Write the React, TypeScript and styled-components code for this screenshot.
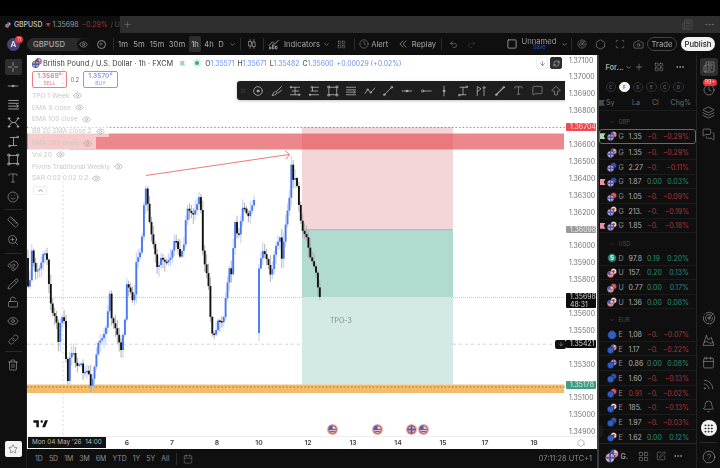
import styled, { createGlobalStyle } from "styled-components";
import {
  ArrowBigDown,
  ArrowBigUp,
  ArrowDown,
  Bell,
  Calendar,
  Camera,
  ChevronDown,
  ChevronUp,
  CircleHelp,
  Clock,
  Ellipsis,
  Eye,
  Grip,
  Hexagon,
  LayoutGrid,
  Layers,
  Link,
  LockOpen,
  Magnet,
  MessageSquare,
  MessagesSquare,
  MountainSnow,
  Newspaper,
  Pencil,
  Plus,
  Radar,
  Redo2,
  RefreshCw,
  Rss,
  Ruler,
  Scan,
  Smile,
  SquarePen,
  Star,
  Trash2,
  Type,
  Undo2,
  ZoomIn,
} from "lucide-react";
import type { ReactNode } from "react";

const GlobalStyle = createGlobalStyle`
  html, body {
    margin: 0;
    padding: 0;
    background: #000;
  }
  * {
    box-sizing: border-box;
  }
`;

const Page = styled.div`
  color: #b8b8b8;
  display: flex;
  filter: blur(0.3px);
  flex-direction: column;
  font-family: Inter, "Liberation Sans", sans-serif;
  height: 468px;
  overflow: hidden;
  padding-top: 16px;
  width: 720px;
`;

const TabBar = styled.div`
  background: #2f2f2f;
  display: flex;
  flex: none;
  height: 17px;
`;

const Tab = styled.div`
  align-items: center;
  background: #0f0f0f;
  display: flex;
  flex: none;
  font-size: 6.9px;
  gap: 3px;
  padding-left: 5px;
  white-space: nowrap;
  width: 120px;
`;

const TabSymbol = styled.span`
  color: #c4c4c4;
  font-weight: 500;
`;

const TabPrice = styled.span`
  color: #9a9a9a;

  i {
    color: #c9323a;
    font-size: 5px;
    font-style: normal;
    margin-right: 2px;
  }
`;

const TabChange = styled.span`
  color: #a13238;
`;

const TabRest = styled.span`
  color: #555;
`;

const TabActions = styled.div`
  align-items: center;
  color: #8a8a8a;
  display: flex;
  flex: 1;
  justify-content: space-between;
  padding: 0 5px 0 3px;
`;

const TabRight = styled.div`
  align-items: center;
  color: #6e6e6e;
  display: flex;
  gap: 11px;
`;

const Toolbar = styled.div`
  align-items: center;
  background: #0f0f0f;
  display: flex;
  flex: none;
  font-size: 7.7px;
  height: 22px;
`;

const Slot = styled.div<{ $w: number; $left?: boolean }>`
  align-items: center;
  color: #a6a6a6;
  display: flex;
  flex: none;
  height: 100%;
  justify-content: ${(p) => (p.$left ? "flex-start" : "center")};
  position: relative;
  white-space: nowrap;
  width: ${(p) => p.$w}px;
`;

const ActiveInterval = styled.div`
  align-items: center;
  background: #2e2e2e;
  border-radius: 2px;
  color: #c8c8c8;
  display: flex;
  flex: none;
  height: 16px;
  justify-content: center;
  width: 12px;
`;

const Sep = styled.div<{ $w: number }>`
  display: flex;
  flex: none;
  justify-content: center;
  width: ${(p) => p.$w}px;

  &::before {
    background: #2c2c2c;
    content: "";
    height: 12px;
    width: 1px;
  }
`;

const Avatar = styled.div`
  align-items: center;
  background: #4a4270;
  border-radius: 50%;
  color: #e4e0f0;
  display: flex;
  font-size: 8px;
  font-weight: 600;
  height: 13px;
  justify-content: center;
  width: 13px;
`;

const AvatarBadge = styled.span`
  background: #e5343c;
  border-radius: 4px;
  color: #f3c5c8;
  font-size: 5px;
  left: 15px;
  line-height: 7px;
  padding: 0 2px;
  position: absolute;
  top: 3px;
`;

const SymbolPill = styled.div`
  align-items: center;
  background: #2a2a2a;
  border-radius: 7px;
  color: #a8a8a8;
  display: flex;
  flex: none;
  font-weight: 500;
  height: 13px;
  justify-content: space-between;
  padding-left: 6px;
  width: 63px;
`;

const PillEye = styled.span`
  align-items: center;
  background: #111;
  border-radius: 50%;
  color: #b8b8b8;
  display: flex;
  height: 13px;
  justify-content: center;
  width: 13px;
`;

const RoundPlus = styled.span`
  align-items: center;
  border: 1px solid #8a8a8a;
  border-radius: 50%;
  color: #aaa;
  display: flex;
  height: 9px;
  justify-content: center;
  width: 9px;
`;

const LayoutName = styled.div`
  color: #9a9a9a;
  display: flex;
  flex-direction: column;
  align-items: center;
  line-height: 7px;
`;

const SaveLink = styled.span`
  color: #214fc0;
  font-size: 5.5px;
  line-height: 5px;
`;

const TradeButton = styled.div`
  align-items: center;
  border: 1px solid #444;
  border-radius: 7px;
  color: #a8a8a8;
  display: flex;
  flex: none;
  height: 14px;
  justify-content: center;
  width: 30px;
`;

const PublishButton = styled.div`
  align-items: center;
  background: #f2f2f2;
  border-radius: 7px;
  color: #222;
  display: flex;
  flex: none;
  font-weight: 500;
  height: 14px;
  justify-content: center;
  margin-left: 4px;
  width: 34px;
`;

const Main = styled.div`
  display: flex;
  flex: 1;
  min-height: 0;
`;

const ToolRail = styled.div`
  background: #0f0f0f;
  border-right: 1px solid #1f1f1f;
  display: flex;
  flex: none;
  flex-direction: column;
  align-items: center;
  padding-top: 4px;
  width: 27px;
`;

const RailButton = styled.div<{ $active?: boolean }>`
  align-items: center;
  background: ${(p) => (p.$active ? "#2e2e2e" : "transparent")};
  border-radius: 2px;
  color: #a8a8a8;
  display: flex;
  flex: none;
  height: ${(p) => (p.$active ? 16 : 18.4)}px;
  justify-content: center;
  margin-bottom: ${(p) => (p.$active ? 2 : 0)}px;
  width: 17px;
`;

const RailLine = styled.div`
  background: #2a2a2a;
  flex: none;
  height: 1px;
  margin: 3px 0;
  width: 17px;
`;

const RailStar = styled.div`
  align-items: center;
  background: #f3f3f3;
  border-radius: 2px;
  color: #444;
  display: flex;
  flex: none;
  height: 16px;
  justify-content: center;
  margin-bottom: 11px;
  margin-top: auto;
  width: 17px;
`;

const ChartColumn = styled.div`
  display: flex;
  flex: none;
  flex-direction: column;
  width: 570px;
`;

const ChartBox = styled.div`
  background: #fff;
  display: flex;
  flex-direction: column;
  height: 394px;
`;

const ChartRow = styled.div`
  display: flex;
  height: 381px;
`;

const Plot = styled.div`
  flex: none;
  overflow: hidden;
  position: relative;
  width: 538px;
`;

const PlotSvg = styled.svg`
  display: block;
  height: 381px;
  left: 0;
  position: absolute;
  top: 0;
  width: 538px;
`;

const Legend = styled.div`
  left: 5px;
  position: absolute;
  top: 3px;
`;

const TitleRow = styled.div`
  align-items: center;
  color: #3a3a3a;
  display: flex;
  font-size: 7.35px;
  height: 10px;
  white-space: nowrap;
`;

const TitleText = styled.span`
  margin: 0 7px 0 1px;
`;

const MarketFlag = styled.span`
  background: #9fd6a6;
  clip-path: polygon(0 0, 100% 0, 70% 50%, 100% 100%, 0 100%);
  height: 5px;
  margin-right: 8px;
  width: 5px;
`;

const StatusDot = styled.span`
  background: #35a892;
  border: 2px solid #d7efe9;
  border-radius: 50%;
  height: 8px;
  margin-right: 4px;
  width: 8px;
`;

const Ohlc = styled.span`
  font-size: 6.9px;
  margin-right: 3px;

  b {
    color: #555;
    font-weight: 500;
  }

  i {
    color: #6f8ff2;
    font-style: normal;
  }
`;

const QuoteRow = styled.div`
  align-items: center;
  display: flex;
  margin-top: 3px;
`;

const QuoteBox = styled.div<{ $tone: string }>`
  border: 1px solid ${(p) => p.$tone};
  border-radius: 2px;
  color: ${(p) => p.$tone};
  display: flex;
  flex-direction: column;
  align-items: center;
  font-size: 6.6px;
  font-weight: 600;
  height: 17px;
  justify-content: center;
  line-height: 7px;
  width: 35px;

  small {
    font-size: 5px;
    font-weight: 400;
    line-height: 6px;
  }
`;

const Spread = styled.span`
  color: #666;
  font-size: 5.5px;
  text-align: center;
  width: 16px;
`;

const Studies = styled.div`
  display: flex;
  flex-direction: column;
  align-items: flex-start;
  margin-top: 2px;
  margin-left: -4px;
`;

const StudyRow = styled.div`
  align-items: center;
  background: rgba(255, 255, 255, 0.55);
  color: #c9c9c9;
  display: flex;
  font-size: 6.6px;
  gap: 4px;
  height: 11.8px;
  padding-left: 4px;
  padding-right: 4px;
  white-space: nowrap;
`;

const StudyEye = styled.span`
  align-items: center;
  color: #9b9b9b;
  display: flex;
`;

const CollapseButton = styled.div`
  align-items: center;
  border: 1px solid #eee;
  border-radius: 2px;
  color: #444;
  display: flex;
  height: 9px;
  justify-content: center;
  margin: 2px 0 0 5px;
  width: 14px;
`;

const DrawingBar = styled.div`
  align-items: center;
  background: #1e1e1e;
  border-radius: 3px;
  box-shadow: 0 1px 3px rgba(0, 0, 0, 0.25);
  color: #b0b0b0;
  display: flex;
  height: 19px;
  left: 210px;
  padding-left: 3px;
  position: absolute;
  top: 26px;
  width: 346px;
`;

const DrawingGrip = styled.span`
  align-items: center;
  color: #444;
  display: flex;
  flex: none;
  width: 9px;
`;

const DrawingTool = styled.span`
  align-items: center;
  display: flex;
  flex: none;
  justify-content: center;
  width: 18.6px;
`;

const ChartButtons = styled.div`
  align-items: center;
  display: flex;
  gap: 2px;
  position: absolute;
  right: 3px;
  top: 2px;
`;

const ChartButton = styled.span<{ $dark?: boolean }>`
  align-items: center;
  background: ${(p) => (p.$dark ? "#2e2e2e" : "#fff")};
  border: 1px solid ${(p) => (p.$dark ? "#2e2e2e" : "#eee")};
  border-radius: 2px;
  color: ${(p) => (p.$dark ? "#ddd" : "#333")};
  display: flex;
  height: 12px;
  justify-content: center;
  width: 12px;
`;

const Drawn = styled.span`
  color: #8a8a8a;
  font-size: 7px;
  left: 303px;
  position: absolute;
  top: 261px;
`;

const Watermark = styled.svg`
  bottom: 7px;
  height: 10px;
  left: 5px;
  position: absolute;
  width: 17px;
`;

const EventFlag = styled.span`
  align-items: center;
  background: #f3a9ae;
  border-radius: 50%;
  display: flex;
  height: 11px;
  justify-content: center;
  position: absolute;
  top: 369px;
  width: 11px;
`;

const PriceAxis = styled.div`
  flex: none;
  position: relative;
  width: 32px;
`;

const PriceTick = styled.span`
  color: #6f6f6f;
  font-size: 6.9px;
  left: 4px;
  line-height: 8px;
  position: absolute;
  transform: translateY(-4px);
`;

const PriceLabel = styled.span<{ $bg: string; $fg: string }>`
  background: ${(p) => p.$bg};
  border-radius: 1px;
  color: ${(p) => p.$fg};
  display: flex;
  flex-direction: column;
  font-size: 6.9px;
  justify-content: center;
  left: 1px;
  line-height: 7.5px;
  padding-left: 4px;
  position: absolute;
  transform: translateY(-4px);
  width: 30px;
  z-index: 1;
`;

const AlertKnob = styled.span`
  align-items: center;
  background: #111;
  border-radius: 2px;
  color: #ccc;
  display: flex;
  height: 9px;
  justify-content: center;
  left: -11px;
  position: absolute;
  top: -0.5px;
  width: 11px;
`;

const TimeAxis = styled.div`
  border-top: 1px solid #eee;
  flex: none;
  height: 13px;
  position: relative;
`;

const TimeTick = styled.span`
  color: #444;
  font-size: 6.8px;
  font-weight: 600;
  line-height: 11px;
  position: absolute;
  transform: translateX(-50%);
`;

const CursorTime = styled.span`
  background: #131313;
  color: #b8b8b8;
  font-size: 6.4px;
  left: 1px;
  line-height: 11px;
  padding: 0 4px;
  position: absolute;
  white-space: nowrap;
`;

const AxisGear = styled.span`
  align-items: center;
  color: #666;
  display: flex;
  height: 11px;
  left: 550px;
  position: absolute;
`;

const RangeBar = styled.div`
  align-items: center;
  background: #0f0f0f;
  color: #909090;
  display: flex;
  flex: 1;
  font-size: 6.9px;
  gap: 6.1px;
  padding: 0 5px 0 8px;
`;

const RangeTime = styled.span`
  color: #8a8a8a;
  margin-left: auto;
  font-size: 7.4px;
`;

const PanelEdge = styled.div`
  background: #3c3c3c;
  flex: none;
  width: 1.5px;
`;

const Watchlist = styled.div`
  background: #0f0f0f;
  border-right: 1px solid #232323;
  display: flex;
  flex: none;
  flex-direction: column;
  position: relative;
  width: 98.5px;
`;

const ListHead = styled.div`
  align-items: center;
  color: #a8a8a8;
  display: flex;
  flex: none;
  font-size: 7.4px;
  font-weight: 600;
  height: 24px;
  padding: 0 5px 0 7px;
`;

const ListName = styled.span`
  flex: none;
  width: 19px;
`;

const ListHeadIcons = styled.div`
  align-items: center;
  display: flex;
  flex: 1;
  justify-content: space-between;
  margin-left: 2px;
  padding-right: 6px;
`;

const ChipRow = styled.div`
  align-items: center;
  display: flex;
  flex: none;
  gap: 3px;
  height: 16px;
  padding-left: 7px;
`;

const Chip = styled.span<{ $on?: boolean }>`
  align-items: center;
  background: ${(p) => (p.$on ? "#f2f2f2" : "transparent")};
  border: 1px solid ${(p) => (p.$on ? "#f2f2f2" : "#333")};
  border-radius: 50%;
  color: ${(p) => (p.$on ? "#555" : "#666")};
  display: flex;
  font-size: 4.5px;
  font-weight: 600;
  height: 10.5px;
  justify-content: center;
  width: 10.5px;
`;

const ColumnHead = styled.div`
  align-items: center;
  border-bottom: 1px solid #1e1e1e;
  display: flex;
  flex: none;
  font-size: 7px;
  height: 16.3px;
  padding-left: 0.5px;
`;

const ListBody = styled.div`
  flex: 1;
  min-height: 0;
  overflow: hidden;
`;

const GroupHead = styled.div`
  align-items: center;
  color: #4e4e4e;
  display: flex;
  font-size: 5.6px;
  gap: 4px;
  height: 17.7px;
  padding: 3px 0 0 10px;
`;

const Row = styled.div<{ $on?: boolean }>`
  align-items: center;
  border: 1px solid ${(p) => (p.$on ? "#6a6a6a" : "transparent")};
  border-bottom-color: ${(p) => (p.$on ? "#6a6a6a" : "#1b1b1b")};
  border-radius: ${(p) => (p.$on ? 3 : 0)}px;
  display: flex;
  font-size: 7px;
  height: 14.67px;
  margin-bottom: ${(p) => (p.$on ? 1.6 : 0)}px;
`;

const RowMark = styled.span<{ $c?: string }>`
  background: ${(p) => p.$c ?? "transparent"};
  clip-path: polygon(0 0, 100% 0, 70% 50%, 100% 100%, 0 100%);
  flex: none;
  height: 6px;
  width: 6px;
`;

const RowIcon = styled.span`
  align-items: center;
  display: flex;
  flex: none;
  justify-content: center;
  width: 12px;
`;

const Cell = styled.span<{ $c: string; $w: number; $ml?: number }>`
  color: ${(p) => p.$c};
  display: block;
  flex: none;
  margin-left: ${(p) => p.$ml ?? 0}px;
  white-space: nowrap;
  width: ${(p) => p.$w}px;
`;

const Pct = styled.span<{ $c: string; $w: number; $ml?: number }>`
  color: ${(p) => p.$c};
  flex: none;
  margin-left: ${(p) => p.$ml ?? 0}px;
  text-align: right;
  white-space: nowrap;
  width: ${(p) => p.$w}px;
`;

const ListFoot = styled.div`
  align-items: center;
  border-top: 1px solid #262626;
  color: #9a9a9a;
  display: flex;
  flex: none;
  font-size: 7px;
  font-weight: 600;
  height: 25px;
  padding: 0 5px 0 6px;
`;

const FootName = styled.span`
  margin-left: 2px;
  width: 17px;
`;

const FootIcons = styled.div`
  align-items: center;
  display: flex;
  gap: 7px;
`;

const SideHandle = styled.span`
  background: #1a1a1a;
  border-radius: 2px;
  height: 12px;
  left: 0;
  position: absolute;
  top: 370px;
  width: 4px;
`;

const SideRail = styled.div`
  align-items: center;
  background: #0f0f0f;
  color: #a0a0a0;
  display: flex;
  flex: 1;
  flex-direction: column;
  padding-top: 3px;
`;

const SideButton = styled.div<{ $active?: boolean }>`
  align-items: center;
  background: ${(p) => (p.$active ? "#2e2e2e" : "transparent")};
  border-radius: 3px;
  display: flex;
  flex: none;
  height: ${(p) => (p.$active ? 18 : 22)}px;
  justify-content: center;
  margin-bottom: ${(p) => (p.$active ? 3 : 0)}px;
  position: relative;
  width: 18px;
`;

const SideBadge = styled.span`
  background: #e5343c;
  border-radius: 4px;
  color: #f5d4d6;
  font-size: 5.6px;
  left: 3px;
  line-height: 7px;
  padding: 0 2px;
  position: absolute;
  top: 0;
`;

const SideGap = styled.div`
  flex: 1;
`;

const SideWhite = styled.span`
  align-items: center;
  background: #f2f2f2;
  border-radius: 50%;
  color: #222;
  display: flex;
  height: 16px;
  justify-content: center;
  width: 16px;
`;

const SideLine = styled.div`
  background: #2a2a2a;
  flex: none;
  height: 1px;
  margin: 3px 0;
  width: 17px;
`;

type FlagKind = "uk" | "us" | "eu" | "au" | "ca" | "jp" | "ch" | "nz" | "usd";

const flagFill: Record<FlagKind, string> = {
  uk: "#e9a7b6",
  us: "#f2c3c7",
  eu: "#2f5fc4",
  au: "#2d52b0",
  ca: "#f0f0f0",
  jp: "#f5f5f5",
  ch: "#e1565c",
  nz: "#3a5aa8",
  usd: "#2f8a6d",
};

const FlagDisc = ({ kind, cx, cy, r }: { kind: FlagKind; cx: number; cy: number; r: number }) => (
  <g>
    <circle cx={cx} cy={cy} r={r} fill={flagFill[kind]} stroke="#0f0f0f" strokeWidth={0.5} />
    {kind === "uk" && (
      <path
        d={`M${cx - r} ${cy}H${cx + r}M${cx} ${cy - r}V${cy + r}`}
        stroke="#3f5fb8"
        strokeWidth={r * 0.4}
      />
    )}
    {kind === "us" && (
      <>
        <path
          d={`M${cx - r * 0.8} ${cy}H${cx + r * 0.8}M${cx - r * 0.6} ${cy + r * 0.5}H${cx + r * 0.6}`}
          stroke="#d33b44"
          strokeWidth={r * 0.26}
        />
        <path d={`M${cx - r} ${cy}A${r} ${r} 0 0 1 ${cx} ${cy - r}V${cy}Z`} fill="#4460b8" />
      </>
    )}
    {(kind === "jp" || kind === "ca") && <circle cx={cx} cy={cy} r={r * 0.45} fill="#d6333c" />}
  </g>
);

const PairIcon = ({ front, back, size = 10 }: { front: FlagKind; back?: FlagKind; size?: number }) => (
  <svg width={size} height={size} viewBox="0 0 10 10">
    {back && <FlagDisc kind={back} cx={6.6} cy={3.4} r={3} />}
    <FlagDisc kind={front} cx={back ? 3.6 : 5} cy={back ? 6.3 : 5} r={back ? 3.4 : 4.4} />
    {front === "usd" && (
      <text x={5} y={7.2} fontSize={6} fontWeight={700} textAnchor="middle" fill="#e6f5ef">
        S
      </text>
    )}
  </svg>
);

const Glyph = ({ size = 13, children }: { size?: number; children: ReactNode }) => (
  <svg
    width={size}
    height={size}
    viewBox="0 0 16 16"
    fill="none"
    stroke="currentColor"
    strokeWidth={1.1}
    strokeLinecap="round"
    strokeLinejoin="round"
  >
    {children}
  </svg>
);

const drawingTools: ReactNode[] = [
  <><circle cx="8" cy="8" r="5.8" /><circle cx="8" cy="8" r="1.4" fill="currentColor" /></>,
  <><path d="M2 14c.5-3 2-5 4-5.5 1.5-.3 2 1 1.5 2.3C7 12.5 4 14 2 14Z" /><path d="M8 8l6-6M9 11l5-4" /></>,
  <><path d="M2 3h12M4 8h9M2 13h12" /><circle cx="2.5" cy="3" r="1" /><circle cx="13.5" cy="13" r="1" /><path d="M8 3v10" /></>,
  <><path d="M6 3h8M4 8h9M2 13h12M6 3v5" /><circle cx="5" cy="3" r="1" /><circle cx="2.5" cy="13" r="1" /></>,
  <><rect x="3" y="3" width="10" height="10" /><path d="M1.5 1.5h2v2h-2zM12.5 1.5h2v2h-2zM1.5 12.5h2v2h-2zM12.5 12.5h2v2h-2z" /></>,
  <><path d="M2 3h12M2 6.5h12M2 9.5h10M2 13h12" /><path d="M12 8l2 1.5-2 1.5" /></>,
  <><path d="M1.5 11 5 6l4 4 5.5-6" /><circle cx="5" cy="6" r="0.9" /><circle cx="9" cy="10" r="0.9" /></>,
  <><path d="M3.5 12.5l9-9" /><circle cx="3" cy="13" r="1.2" /><circle cx="13" cy="3" r="1.2" /></>,
  <><path d="M1.5 8h13" /><circle cx="8" cy="8" r="1.2" fill="currentColor" /></>,
  <><path d="M5 8h10" /><circle cx="3.5" cy="8" r="1.5" /></>,
  <><path d="M8 1.5v13" /><circle cx="8" cy="8" r="1.2" fill="currentColor" /></>,
  <><path d="M8 3v10M4 3h8M4 13h8" /><circle cx="13" cy="2.5" r="1.1" /><circle cx="3" cy="13.5" r="1.1" /></>,
  <><path d="M3 14V2l5 3-5 4M12 6v8" /><circle cx="12" cy="3.5" r="1.3" /></>,
  <><path d="M3.5 12.5l9-9" strokeWidth={1.5} /><circle cx="3" cy="13" r="1.2" /><circle cx="13" cy="3" r="1.1" /></>,
];

const studies = [
  "TPO 1 Week",
  "EMA 9 close",
  "EMA 100 close",
  "BB 20 SMA close 2",
  "EMA 200 close",
  "Vol 20",
  "Pivots Traditional Weekly",
  "SAR 0.02 0.02 0.2",
];

const intervals = [
  { label: "1m", w: 16 },
  { label: "5m", w: 16 },
  { label: "15m", w: 20 },
  { label: "30m", w: 20 },
];

const RED = "#a8343a";
const GREEN = "#2d8a6e";

// the narrow columns show only these few characters, as in the picture
type Item = {
  mark?: string;
  front: FlagKind;
  back?: FlagKind;
  sym: string;
  last: string;
  lastRed?: boolean;
  abs: string;
  pct: string;
  on?: boolean;
};

const groups: { name: string; rows: Item[] }[] = [
  {
    name: "GBP",
    rows: [
      { mark: "#a5d9ac", front: "uk", back: "us", sym: "G", last: "1.35", abs: "−0.", pct: "−0.29%", on: true },
      { front: "uk", back: "us", sym: "G", last: "1.35", abs: "−0.", pct: "−0.29%" },
      { front: "uk", back: "au", sym: "G", last: "2.27", abs: "−0.", pct: "−0.11%" },
      { mark: "#ef8fa6", front: "uk", back: "au", sym: "G", last: "1.87", abs: "0.00", pct: "0.03%" },
      { front: "uk", back: "ch", sym: "G", last: "1.05", abs: "−0.", pct: "−0.09%" },
      { front: "uk", back: "jp", sym: "G", last: "213.", abs: "−0.", pct: "−0.19%" },
      { mark: "#ef8fa6", front: "uk", back: "ca", sym: "G", last: "1.85", abs: "−0.", pct: "−0.18%" },
    ],
  },
  {
    name: "USD",
    rows: [
      { front: "usd", sym: "D", last: "97.8", abs: "0.19", pct: "0.20%" },
      { front: "us", back: "jp", sym: "U", last: "157.", abs: "0.20", pct: "0.13%" },
      { front: "us", back: "ch", sym: "U", last: "0.77", abs: "0.00", pct: "0.17%" },
      { front: "us", back: "ca", sym: "U", last: "1.36", abs: "0.00", pct: "0.08%" },
    ],
  },
  {
    name: "EUR",
    rows: [
      { front: "eu", sym: "E", last: "1,08", abs: "−0.", pct: "−0.07%" },
      { front: "eu", back: "us", sym: "E", last: "1.17", abs: "−0.", pct: "−0.22%" },
      { front: "eu", back: "uk", sym: "E", last: "0.86", abs: "0.00", pct: "0.08%" },
      { front: "eu", back: "au", sym: "E", last: "1.60", abs: "−0.", pct: "−0.13%" },
      { front: "eu", back: "ch", sym: "E", last: "0.91", lastRed: true, abs: "−0.", pct: "−0.02%" },
      { front: "eu", back: "jp", sym: "E", last: "185.", abs: "−0.", pct: "−0.13%" },
      { front: "eu", back: "nz", sym: "E", last: "1.97", abs: "−0.", pct: "−0.03%" },
      { front: "eu", back: "ca", sym: "E", last: "1.62", abs: "0.00", pct: "0.12%" },
    ],
  },
];

const priceY = (p: number) => 60.5 + (1.371 - p) * 16890;

const priceTicks = [
  "1.37100", "1.37000", "1.36900", "1.36800", "1.36600", "1.36500", "1.36400", "1.36300", "1.36200",
  "1.36000", "1.35900", "1.35800", "1.35600", "1.35500", "1.35300", "1.35100", "1.35000", "1.34900",
];

const timeTicks = [
  { t: "6", x: 127 }, { t: "7", x: 172 }, { t: "8", x: 217 }, { t: "10", x: 259 }, { t: "12", x: 308 },
  { t: "13", x: 353 }, { t: "14", x: 398 }, { t: "15", x: 443 }, { t: "17", x: 485 }, { t: "19", x: 534 },
];

const eventFlags: { x: number; kind: FlagKind }[] = [
  { x: 332, kind: "us" },
  { x: 377, kind: "us" },
  { x: 411, kind: "uk" },
  { x: 423, kind: "us" },
];

const ranges = ["1D", "5D", "1M", "3M", "6M", "YTD", "1Y", "5Y", "All"];

// close path read off the picture, in page coordinates
const pathA: [number, number][] = [
  [28, 258], [31, 303], [33, 246], [37, 272], [42, 268], [46, 250], [49, 260], [52, 300], [55, 315], [58, 317],
  [60, 345], [63, 315], [67, 323], [68, 363], [70, 383], [72, 353], [76, 353], [78, 367], [83, 363], [85, 373],
  [90, 370], [93, 388], [97, 363], [100, 343], [105, 337], [108, 327], [112, 290], [113, 317], [118, 330],
  [123, 350], [127, 318], [128, 283], [132, 290], [136, 307], [137, 265], [143, 250], [145, 220], [147, 183],
  [150, 207], [152, 227], [157, 253], [160, 273], [162, 257], [168, 263], [173, 257], [177, 237], [182, 257],
  [187, 240], [188, 207], [195, 215], [198, 208], [202, 193], [205, 257], [210, 280], [212, 310], [213, 333],
  [217, 335], [220, 320], [225, 323], [228, 293], [232, 263], [233, 277], [237, 222], [240, 240], [245, 205],
  [250, 217], [256, 200],
];

const pathB: [number, number][] = [
  [259, 333], [261, 265], [265, 250], [270, 263], [273, 278], [277, 248], [282, 237], [283, 265], [288, 220],
  [292, 193], [293, 163], [295, 180], [298, 177], [302, 217], [305, 233], [308, 235], [312, 257], [315, 263],
  [318, 273], [321, 297],
];

const yAt = (path: [number, number][], x: number) => {
  for (let i = 1; i < path.length; i++) {
    if (x <= path[i][0]) {
      const [x0, y0] = path[i - 1];
      const [x1, y1] = path[i];
      return y0 + ((x - x0) / (x1 - x0)) * (y1 - y0);
    }
  }
  return path[path.length - 1][1];
};

const makeCandles = (path: [number, number][]) => {
  const out: { x: number; top: number; h: number; up: boolean; hi: number; lo: number }[] = [];
  const end = path[path.length - 1][0];
  for (let x = path[0][0]; x < end; x += 1.9) {
    const a = yAt(path, x);
    const b = yAt(path, x + 1.9);
    const seed = Math.abs(Math.sin(x * 12.9898) * 43758.5453) % 1;
    const seed2 = Math.abs(Math.sin(x * 78.233) * 12543.123) % 1;
    const top = Math.min(a, b);
    const h = Math.max(Math.abs(a - b), 1.5);
    out.push({
      x,
      top,
      h,
      up: b <= a,
      hi: top - 1 - seed * 9,
      lo: top + h + 1 + seed2 * 9,
    });
  }
  return out;
};

const candles = [...makeCandles(pathA), ...makeCandles(pathB)];

const ChartDrawing = () => (
  <PlotSvg viewBox="27 55 538 381">
    <line x1="63" x2="63" y1="55" y2="436" stroke="#cfcfcf" strokeWidth="0.8" strokeDasharray="2 2.5" />
    <line x1="27" x2="565" y1="297.4" y2="297.4" stroke="#9a9a9a" strokeWidth="0.6" strokeDasharray="1 1" />
    <line x1="27" x2="565" y1="344.2" y2="344.2" stroke="#bdbdbd" strokeWidth="0.7" strokeDasharray="3 3" />
    <rect x="302" y="127" width="151" height="102.5" fill="#f5d6d8" />
    <rect x="302" y="230" width="151" height="67.4" fill="#b1dbd1" />
    <rect x="302" y="297.4" width="151" height="87" fill="#d3e9e5" />
    <line x1="302" x2="453" y1="229.7" y2="229.7" stroke="#a9b3ae" strokeWidth="1" />
    <rect x="27" y="133.5" width="537" height="16" fill="#e2474f" fillOpacity="0.65" />
    <rect x="27" y="384.5" width="537" height="8.5" fill="#f4bb68" />
    <line x1="27" x2="565" y1="127.4" y2="127.4" stroke="#777" strokeWidth="0.8" strokeDasharray="1.6 2" />
    <line x1="27" x2="565" y1="387" y2="387" stroke="#9a7a3a" strokeWidth="1" strokeDasharray="1.6 2" />
    {candles.map((c) => (
      <line
        key={`w${c.x}`}
        x1={c.x}
        x2={c.x}
        y1={c.hi}
        y2={c.lo}
        stroke={c.up ? "#b9c9fa" : "#a8a8a8"}
        strokeWidth="0.9"
      />
    ))}
    {candles.map((c) => (
      <rect key={`b${c.x}`} x={c.x - 0.95} y={c.top} width="1.9" height={c.h} fill={c.up ? "#4a78f5" : "#111"} />
    ))}
    <path d="M146 175.5 289 154.5M285 150.5l4.5 4-3.5 4.5" stroke="#ec6a70" strokeWidth="0.9" fill="none" />
  </PlotSvg>
);

const App = () => {
  return (
    <>
      <GlobalStyle />
      <Page>
        <TabBar>
          <Tab>
            <PairIcon front="uk" back="us" />
            <TabSymbol>GBPUSD</TabSymbol>
            <TabPrice>
              <i>▼</i>1.35698
            </TabPrice>
            <TabChange>−0.29%</TabChange>
            <TabRest>/ U</TabRest>
          </Tab>
          <TabActions>
            <Plus size={9} strokeWidth={1.2} />
            <TabRight>
              <Newspaper size={11} strokeWidth={1} />
              <Ellipsis size={11} />
            </TabRight>
          </TabActions>
        </TabBar>

        <Toolbar>
          <Slot $w={27}>
            <Avatar>A</Avatar>
            <AvatarBadge>11</AvatarBadge>
          </Slot>
          <SymbolPill>
            GBPUSD
            <PillEye>
              <Eye size={9} strokeWidth={1.4} />
            </PillEye>
          </SymbolPill>
          <Slot $w={22}>
            <RoundPlus>
              <Plus size={6} strokeWidth={1.6} />
            </RoundPlus>
          </Slot>
          <Sep $w={3} />
          {intervals.map((i) => (
            <Slot key={i.label} $w={i.w}>
              {i.label}
            </Slot>
          ))}
          <Slot $w={2} />
          <ActiveInterval>1h</ActiveInterval>
          <Slot $w={16}>4h</Slot>
          <Slot $w={8}>D</Slot>
          <Slot $w={14}>
            <ChevronDown size={7} />
          </Slot>
          <Sep $w={2} />
          <Slot $w={21}>
            <Glyph size={10}>
              <path d="M5 1v14M11 1v14" />
              <rect x="3" y="4" width="4" height="7" fill="#0f0f0f" />
              <rect x="9" y="5" width="4" height="7" fill="#0f0f0f" />
            </Glyph>
          </Slot>
          <Sep $w={2} />
          <Slot $w={20}>
            <Glyph size={12}>
              <path d="M1.5 10 6 5l3 3 5-5" />
              <path d="M2 14v-2h2v2zM6 14V9h2v5zM10 14v-3h2v3z" />
            </Glyph>
          </Slot>
          <Slot $w={35} $left>Indicators</Slot>
          <Slot $w={14}>
            <ChevronDown size={7} />
          </Slot>
          <Slot $w={16}>
            <LayoutGrid size={9} strokeWidth={1.1} />
          </Slot>
          <Sep $w={10} />
          <Slot $w={10}>
            <Clock size={10} strokeWidth={1.1} />
          </Slot>
          <Slot $w={28} $left>
            <span>&nbsp;Alert</span>
          </Slot>
          <Slot $w={12}>
            <Glyph size={10}>
              <path d="M8 3 3 8l5 5M13 3 8 8l5 5" />
            </Glyph>
          </Slot>
          <Slot $w={30}>Replay</Slot>
          <Sep $w={4} />
          <Slot $w={20}>
            <Undo2 size={9} strokeWidth={1.2} />
          </Slot>
          <Slot $w={16}>
            <Redo2 size={9} strokeWidth={1.2} color="#4a4a4a" />
          </Slot>
          <Slot $w={26} />
          <Slot $w={14}>
            <Glyph size={12}>
              <rect x="2.5" y="2.5" width="11" height="11" rx="1" />
            </Glyph>
          </Slot>
          <Slot $w={40}>
            <LayoutName>
              Unnamed
              <SaveLink>Save</SaveLink>
            </LayoutName>
          </Slot>
          <Slot $w={10}>
            <ChevronDown size={7} />
          </Slot>
          <Sep $w={4} />
          <Slot $w={17}>
            <Radar size={10} strokeWidth={1.1} />
          </Slot>
          <Slot $w={20}>
            <Hexagon size={11} strokeWidth={1.1} />
          </Slot>
          <Slot $w={19}>
            <Scan size={10} strokeWidth={1.1} />
          </Slot>
          <Slot $w={18}>
            <Camera size={11} strokeWidth={1.1} />
          </Slot>
          <TradeButton>Trade</TradeButton>
          <PublishButton>Publish</PublishButton>
        </Toolbar>

        <Main>
          <ToolRail>
            <RailButton $active>
              <Glyph size={12}>
                <path d="M8 2v4M8 10v4M2 8h4M10 8h4" />
              </Glyph>
            </RailButton>
            <RailButton>
              <Glyph size={12}>
                <path d="M1.5 8h13" />
                <circle cx="8" cy="8" r="1.2" fill="currentColor" />
              </Glyph>
            </RailButton>
            <RailButton>
              <Glyph size={13}>
                <path d="M2 3h12M2 6.5h12M2 10h12M2 13.5h12" />
                <path d="M12 8l2 2-2 2" />
              </Glyph>
            </RailButton>
            <RailButton>
              <Glyph size={13}>
                <path d="M2 3 6 8l-4 5M14 3l-4 5 4 5M6 8h4" />
                <circle cx="2.5" cy="3" r="1" />
                <circle cx="13.5" cy="3" r="1" />
                <circle cx="2.5" cy="13" r="1" />
                <circle cx="13.5" cy="13" r="1" />
              </Glyph>
            </RailButton>
            <RailButton>
              <Glyph size={13}>
                <path d="M8 3v10M4 3h8M4 13h8" />
                <circle cx="13" cy="2.5" r="1" />
                <circle cx="3" cy="13.5" r="1" />
              </Glyph>
            </RailButton>
            <RailButton>
              <Glyph size={13}>
                <rect x="3" y="3" width="10" height="10" />
                <path d="M1.5 1.5h2v2h-2zM12.5 1.5h2v2h-2zM1.5 12.5h2v2h-2zM12.5 12.5h2v2h-2z" />
              </Glyph>
            </RailButton>
            <RailButton>
              <Type size={12} strokeWidth={1.2} />
            </RailButton>
            <RailButton>
              <Smile size={12} strokeWidth={1.2} />
            </RailButton>
            <RailLine />
            <RailButton>
              <Ruler size={12} strokeWidth={1.2} />
            </RailButton>
            <RailButton>
              <ZoomIn size={12} strokeWidth={1.2} />
            </RailButton>
            <RailLine />
            <RailButton>
              <Magnet size={12} strokeWidth={1.2} />
            </RailButton>
            <RailButton>
              <Pencil size={12} strokeWidth={1.2} />
            </RailButton>
            <RailButton>
              <LockOpen size={12} strokeWidth={1.2} />
            </RailButton>
            <RailButton>
              <Eye size={12} strokeWidth={1.2} />
            </RailButton>
            <RailButton>
              <Link size={11} strokeWidth={1.2} />
            </RailButton>
            <RailLine />
            <RailButton>
              <Trash2 size={12} strokeWidth={1.2} />
            </RailButton>
            <RailStar>
              <Star size={10} strokeWidth={1.3} />
            </RailStar>
          </ToolRail>

          <ChartColumn>
            <ChartBox>
              <ChartRow>
                <Plot>
                  <ChartDrawing />
                  <Legend>
                    <TitleRow>
                      <PairIcon front="uk" back="us" />
                      <TitleText>British Pound / U.S. Dollar · 1h · FXCM</TitleText>
                      <MarketFlag />
                      <StatusDot />
                      <Ohlc><b>O</b><i>1.35571</i></Ohlc>
                      <Ohlc><b>H</b><i>1.35671</i></Ohlc>
                      <Ohlc><b>L</b><i>1.35482</i></Ohlc>
                      <Ohlc><b>C</b><i>1.35600</i></Ohlc>
                      <Ohlc><i>+0.00029 (+0.02%)</i></Ohlc>
                    </TitleRow>
                    <QuoteRow>
                      <QuoteBox $tone="#ef7d83">
                        1.3569⁸
                        <small>SELL</small>
                      </QuoteBox>
                      <Spread>0.2</Spread>
                      <QuoteBox $tone="#7d9cf5">
                        1.3570⁰
                        <small>BUY</small>
                      </QuoteBox>
                    </QuoteRow>
                    <Studies>
                      {studies.map((s) => (
                        <StudyRow key={s}>
                          {s}
                          <StudyEye>
                            <Eye size={9} strokeWidth={1.5} />
                          </StudyEye>
                        </StudyRow>
                      ))}
                      <CollapseButton>
                        <ChevronUp size={7} strokeWidth={2} />
                      </CollapseButton>
                    </Studies>
                  </Legend>
                  <DrawingBar>
                    <DrawingGrip>
                      <Grip size={6} />
                    </DrawingGrip>
                    {drawingTools.map((tool, i) => (
                      <DrawingTool key={i}>
                        <Glyph size={12}>{tool}</Glyph>
                      </DrawingTool>
                    ))}
                    <DrawingTool>
                      <Type size={11} strokeWidth={1.2} />
                    </DrawingTool>
                    <DrawingTool>
                      <MessageSquare size={11} strokeWidth={1.2} />
                    </DrawingTool>
                    <DrawingTool>
                      <ArrowBigUp size={12} strokeWidth={1.2} />
                    </DrawingTool>
                    <DrawingTool>
                      <ArrowBigDown size={12} strokeWidth={1.2} />
                    </DrawingTool>
                  </DrawingBar>
                  <ChartButtons>
                    <ChartButton>
                      <ArrowDown size={7} strokeWidth={1.6} />
                    </ChartButton>
                    <ChartButton $dark>
                      <RefreshCw size={7} strokeWidth={1.6} />
                    </ChartButton>
                  </ChartButtons>
                  <Drawn>TPO-3</Drawn>
                  <Watermark viewBox="0 0 36 24">
                    <path
                      d="M14 3H1v6h7v11h6V3Zm15 17h-7l7-17h7l-7 17ZM21 9a3 3 0 1 0 0-6 3 3 0 0 0 0 6Z"
                      fill="#111"
                    />
                  </Watermark>
                  {eventFlags.map((f, i) => (
                    <EventFlag key={i} style={{ left: f.x - 27 - 5.5 }}>
                      <PairIcon front={f.kind} size={9} />
                    </EventFlag>
                  ))}
                </Plot>
                <PriceAxis>
                  {priceTicks.map((p) => (
                    <PriceTick key={p} style={{ top: priceY(Number(p)) - 55 }}>
                      {p}
                    </PriceTick>
                  ))}
                  <PriceLabel $bg="#ee4a52" $fg="#fbd5d7" style={{ top: priceY(1.36704) - 55 }}>
                    1.36704
                  </PriceLabel>
                  <PriceLabel $bg="#9a9a9a" $fg="#efefef" style={{ top: priceY(1.36098) - 55 }}>
                    1.36098
                  </PriceLabel>
                  <PriceLabel $bg="#0c0c0c" $fg="#d0d0d0" style={{ top: priceY(1.35698) - 55 }}>
                    1.35698
                    <span>48:31</span>
                  </PriceLabel>
                  <PriceLabel $bg="#0c0c0c" $fg="#d0d0d0" style={{ top: priceY(1.35421) - 55 }}>
                    1.35421
                    <AlertKnob>
                      <ArrowDown size={6} strokeWidth={1.6} />
                    </AlertKnob>
                  </PriceLabel>
                  <PriceLabel $bg="#3f9b82" $fg="#d5f0e8" style={{ top: priceY(1.35178) - 55 }}>
                    1.35178
                  </PriceLabel>
                </PriceAxis>
              </ChartRow>
              <TimeAxis>
                <CursorTime>Mon 04 May '26&nbsp;&nbsp;14:00</CursorTime>
                {timeTicks.map((t) => (
                  <TimeTick key={t.t} style={{ left: t.x - 27 }}>
                    {t.t}
                  </TimeTick>
                ))}
                <AxisGear>
                  <Hexagon size={8} strokeWidth={1.3} />
                </AxisGear>
              </TimeAxis>
            </ChartBox>
            <RangeBar>
              {ranges.map((r) => (
                <span key={r}>{r}</span>
              ))}
              <Sep $w={1} />
              <Calendar size={10} strokeWidth={1.1} />
              <RangeTime>07:11:28 UTC+1</RangeTime>
            </RangeBar>
          </ChartColumn>

          <PanelEdge />

          <Watchlist>
            <ListHead>
              <ListName>For...</ListName>
              <ChevronDown size={7} />
              <ListHeadIcons>
                <Plus size={10} strokeWidth={1.2} />
                <LayoutGrid size={10} strokeWidth={1.1} />
                <Ellipsis size={10} />
              </ListHeadIcons>
            </ListHead>
            <ChipRow>
              {["C", "F", "S", "E", "C", "D"].map((c, i) => (
                <Chip key={i} $on={c === "F"}>
                  {c}
                </Chip>
              ))}
            </ChipRow>
            <ColumnHead>
              <RowMark $c="#4a4a4a" />
              <Cell $c="#6e6e6e" $w={10} $ml={1}>Sy</Cell>
              <Cell $c="#6e6e6e" $w={9} $ml={16}>La</Cell>
              <Cell $c="#6e6e6e" $w={7} $ml={11}>Cl</Cell>
              <Pct $c="#6e6e6e" $w={22} $ml={10}>Chg%</Pct>
            </ColumnHead>
            <ListBody>
              {groups.map((g) => (
                <div key={g.name}>
                  <GroupHead>
                    <ChevronDown size={6} />
                    <span>{g.name}</span>
                  </GroupHead>
                  {g.rows.map((r, i) => {
                    const tone = r.pct.startsWith("−") ? RED : GREEN;
                    return (
                      <Row key={i} $on={r.on}>
                        <RowMark $c={r.mark} />
                        <RowIcon>
                          <PairIcon front={r.front} back={r.back} />
                        </RowIcon>
                        <Cell $c="#8f8f8f" $w={6} $ml={1}>{r.sym}</Cell>
                        <Cell $c={r.lastRed ? RED : "#b0b0b0"} $w={15.5} $ml={4}>{r.last}</Cell>
                        <Cell $c={tone} $w={12} $ml={3}>{r.abs}</Cell>
                        <Pct $c={tone} $w={27} $ml={3}>{r.pct}</Pct>
                      </Row>
                    );
                  })}
                </div>
              ))}
            </ListBody>
            <SideHandle />
            <ListFoot>
              <PairIcon front="uk" back="us" size={14} />
              <FootName>G.</FootName>
              <FootIcons>
                <LayoutGrid size={11} strokeWidth={1.1} />
                <SquarePen size={10} strokeWidth={1.1} />
                <Ellipsis size={10} />
              </FootIcons>
            </ListFoot>
          </Watchlist>

          <SideRail>
            <SideButton $active>
              <Newspaper size={12} strokeWidth={1.2} />
            </SideButton>
            <SideButton>
              <Clock size={12} strokeWidth={1.2} />
              <SideBadge>99+</SideBadge>
            </SideButton>
            <SideButton>
              <Layers size={13} strokeWidth={1.1} />
            </SideButton>
            <SideButton>
              <MessagesSquare size={13} strokeWidth={1.1} />
            </SideButton>
            <SideGap />
            <SideButton>
              <Radar size={14} strokeWidth={1.1} />
            </SideButton>
            <SideButton>
              <MountainSnow size={13} strokeWidth={1.1} />
            </SideButton>
            <SideButton>
              <Calendar size={13} strokeWidth={1.1} />
            </SideButton>
            <SideButton>
              <Rss size={13} strokeWidth={1.1} />
            </SideButton>
            <SideButton>
              <Bell size={13} strokeWidth={1.1} />
            </SideButton>
            <SideButton>
              <SideWhite>
                <Grip size={11} strokeWidth={2} />
              </SideWhite>
            </SideButton>
            <SideLine />
            <SideButton>
              <CircleHelp size={14} strokeWidth={1.1} />
            </SideButton>
          </SideRail>
        </Main>
      </Page>
    </>
  );
};

export default App;
